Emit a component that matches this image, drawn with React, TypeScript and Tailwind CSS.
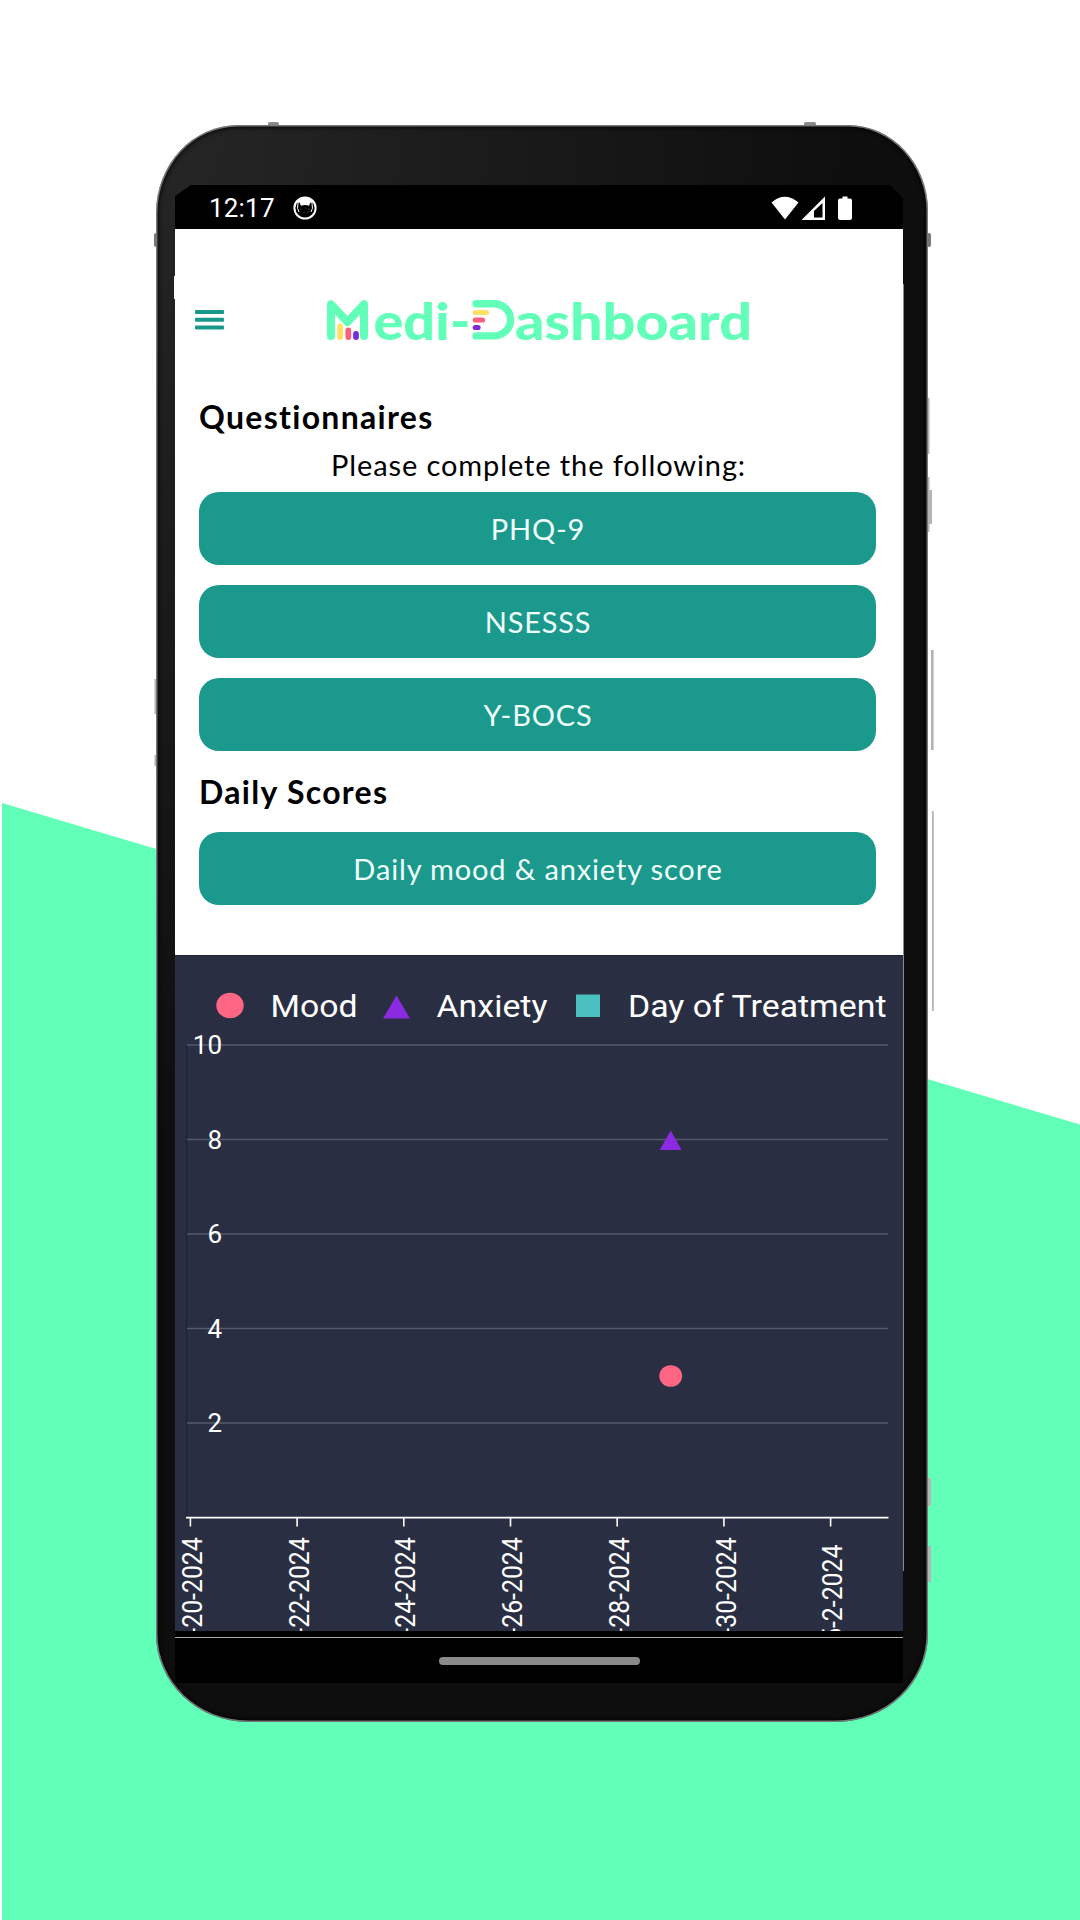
import React from "react";

const questionnaires = [
  { name: "PHQ-9", spacing: "tracking-[0.800px]" },
  { name: "NSESSS", spacing: "tracking-[0.800px]" },
  { name: "Y-BOCS", spacing: "tracking-[0.800px]" },
];

const gridLines = [
  { label: "10", y: 90 },
  { label: "8", y: 184.5 },
  { label: "6", y: 279 },
  { label: "4", y: 373.5 },
  { label: "2", y: 468 },
];

const ticks = [
  { label: "4-20-2024", x: 15.4, top: 582.2 },
  { label: "4-22-2024", x: 122.1, top: 582.2 },
  { label: "4-24-2024", x: 228.8, top: 582.2 },
  { label: "4-26-2024", x: 335.5, top: 582.2 },
  { label: "4-28-2024", x: 442.2, top: 582.2 },
  { label: "4-30-2024", x: 548.9, top: 582.2 },
  { label: "5-2-2024", x: 655.6, top: 589.5 },
];

function Backdrop() {
  return (
    <svg className="absolute inset-0" width="1080" height="1920" viewBox="0 0 1080 1920">
      <path d="M2 803 L1080 1124.5 V1920 H2 Z" fill="#62ffb8" />
      <g fill="#b4b4b4">
        <rect x="154" y="233" width="4" height="14" rx="2" fill="#777" />
        <rect x="927" y="233" width="4" height="14" rx="2" fill="#777" />
        <rect x="268" y="122" width="11" height="6" rx="2" fill="#8a8a8a" />
        <rect x="804" y="122" width="12" height="6" rx="2" fill="#8a8a8a" />
        <rect x="154.500" y="679" width="3" height="35" />
        <rect x="154.500" y="755" width="3" height="11" />
        <rect x="927" y="398" width="2.5" height="56" />
        <rect x="927" y="477" width="2.5" height="55" />
        <rect x="927" y="490" width="5" height="34" />
        <rect x="931" y="650" width="2.6" height="100" />
        <rect x="932" y="811" width="1.8" height="200" />
        <rect x="927" y="1478" width="4" height="28" />
        <rect x="927" y="1546" width="4" height="36" />
      </g>
    </svg>
  );
}

function StatusBar() {
  return (
    <div className="flex h-[44px] items-center justify-between bg-black pl-[34px] pr-[50px] pt-px [clip-path:polygon(16px_0,715px_0,728px_13px,728px_100%,0_100%,0_11px)]">
      <div className="flex items-center gap-[19px]">
        <span className="w-[65px] whitespace-nowrap font-[Roboto] text-[26px] leading-[32px] tracking-[0.2px] text-white">12:17</span>
        <svg width="24" height="24" viewBox="0 0 24 24">
          <circle cx="12" cy="12" r="10.6" fill="#000" stroke="#fff" strokeWidth="2" />
          <path d="M3.500 6 Q12 -4 20.500 6 L19 7 L17.500 6.500 L16 9.800 Q12 8.200 8 9.800 L6.500 6.500 L5 7 Z" fill="#fff" />
          <path d="M5 7 Q3.600 13 6 16 M19 7 Q20.400 13 18 16" stroke="#fff" strokeWidth="1" fill="none" />
          <g fill="#777">
            <circle cx="8" cy="13" r=".6" /><circle cx="13" cy="12" r=".6" /><circle cx="11" cy="16" r=".6" /><circle cx="15" cy="16" r=".6" /><circle cx="16" cy="13" r=".6" />
          </g>
        </svg>
      </div>
      <svg width="82" height="24" viewBox="0 0 82 24" fill="#fff">
        <path d="M0.500 6.500 Q13.700 -5 27.500 6.500 L14 23.500 Z" />
        <path fillRule="evenodd" d="M54 .5 V24 H30.500 Z M51.500 7 V21.500 H43 V15 Z" />
        <path d="M71.500 0.500 H76.500 V2.500 H79 Q81 2.500 81 4.500 V22 Q81 24 79 24 H69 Q67 24 67 22 V4.500 Q67 2.500 69 2.500 H71.500 Z" />
      </svg>
    </div>
  );
}

function Logo() {
  return (
    <svg className="overflow-visible" width="428" height="64" viewBox="0 0 428 64" fill="none" strokeLinecap="round" strokeLinejoin="round">
      <path d="M5 40 V8.300 L21.500 26 L38 8.300 V40" stroke="#62ffb8" strokeWidth="8" />
      <path d="M14.200 30.500 V41" stroke="#ffe066" strokeWidth="5.800" />
      <path d="M22.300 34.500 V41" stroke="#f9607d" strokeWidth="5.800" />
      <path d="M30 38 V41" stroke="#7a2bd6" strokeWidth="5.800" />
      <text x="47.500" y="43.500" textLength="97" lengthAdjust="spacingAndGlyphs" className="font-[Lato] text-[52px] font-black" fill="#62ffb8">edi-</text>
      <path d="M150 7.700 H168 A16.500 16 0 0 1 168 39.900 H150" stroke="#62ffb8" strokeWidth="7.400" />
      <path d="M149.300 16.500 H160.500" stroke="#ffe066" strokeWidth="5.200" />
      <path d="M149.300 24 H156.500" stroke="#f9607d" strokeWidth="5.200" />
      <path d="M149.300 31.500 H152" stroke="#7a2bd6" strokeWidth="5.200" />
      <text x="189" y="43.500" textLength="237" lengthAdjust="spacingAndGlyphs" className="font-[Lato] text-[52px] font-black" fill="#62ffb8">ashboard</text>
    </svg>
  );
}

function Header() {
  return (
    <header className="flex h-[167px] items-start pl-[20px] pt-[67px]">
      <svg className="mt-[13px]" width="29" height="22" viewBox="0 0 29 22" fill="#1a988b">
        <rect y="1" width="29" height="4" rx="1" />
        <rect y="8.700" width="29" height="4" rx="1" />
        <rect y="16.400" width="29" height="4" rx="1" />
      </svg>
      <div className="ml-[102px]">
        <Logo />
      </div>
    </header>
  );
}

function ActionButton({ children, spacing }: { children: string; spacing: string }) {
  return (
    <button className={`flex h-[73px] w-full items-center justify-center rounded-[20px] bg-[#1b998d] pl-px text-[29px] leading-none text-[#f0fffb] ${spacing}`}>
      {children}
    </button>
  );
}

function Chart() {
  return (
    <svg className="block bg-[#2a2e42]" width="728" height="676" viewBox="0 0 728 676" fontFamily="Roboto, sans-serif" fill="#fff">
      <rect width="728" height="1" fill="#1f2231" />
      <ellipse cx="55" cy="50.500" rx="13.700" ry="12.800" fill="#ff6684" />
      <text x="95.500" y="62" fontSize="32" textLength="87" lengthAdjust="spacingAndGlyphs">Mood</text>
      <path d="M221.500 40.500 L235 63.500 H208 Z" fill="#8a2be2" />
      <text x="261.500" y="62" fontSize="32" textLength="111" lengthAdjust="spacingAndGlyphs">Anxiety</text>
      <rect x="401" y="39.500" width="24" height="22.500" fill="#4bc0c0" />
      <text x="453" y="62" fontSize="32" textLength="258.500" lengthAdjust="spacingAndGlyphs">Day of Treatment</text>
      <path d="M11.700 90 V562" stroke="#22222a" strokeWidth="1.200" />
      {gridLines.map((g) => (
        <g key={g.label}>
          <path d={`M12 ${g.y} H713`} stroke="#555a6a" strokeWidth="1.500" />
          <text x="47" y={g.y + 9} fontSize="26" textAnchor="end">{g.label}</text>
        </g>
      ))}
      <path d="M11 562.700 H713.500" stroke="#fff" strokeWidth="1.800" />
      {ticks.map((t) => (
        <g key={t.label}>
          <path d={`M${t.x} 563 V571.500`} stroke="#fff" strokeWidth="1.600" />
          <text transform={`translate(${t.x + 11.600} ${t.top}) rotate(-90) scale(.92 1)`} fontSize="27" textAnchor="end">{t.label}</text>
        </g>
      ))}
      <path d="M495.700 175.500 L506.700 195 H484.700 Z" fill="#8a2be2" />
      <ellipse cx="495.700" cy="421" rx="11.400" ry="10.800" fill="#ff6684" />
    </svg>
  );
}

export default function App() {
  return (
    <div className="relative h-[1920px] w-[1080px] overflow-hidden bg-white pl-[156px] pt-[125px]">
      <Backdrop />
      <div className="relative h-[1597px] w-[772px] rounded-[82px_80px_92px_92px/88px_86px_88px_88px] bg-[#0d0d0d] bg-[radial-gradient(ellipse_700px_1000px_at_0_0,#262626_0%,#0e0e0e_100%)] pl-[19px] pt-[60px] shadow-[inset_0_0_0_1.500px_#77777a,inset_0_0_5px_2px_#000]">
        <div className="relative w-[728px]">
          <StatusBar />
          <div className="h-[726px] bg-white font-[Lato] text-black">
            <Header />
            <section className="pl-[24px] pr-[27px]">
              <h2 className="h-[50px] text-[32px] font-bold leading-[42px] tracking-[1.300px]">Questionnaires</h2>
              <p className="h-[46px] pl-[2px] text-center text-[29px] leading-[37px] tracking-[0.900px]">Please complete the following:</p>
              <div className="flex flex-col gap-[20px]">
                {questionnaires.map((q) => (
                  <ActionButton key={q.name} spacing={q.spacing}>{q.name}</ActionButton>
                ))}
              </div>
              <h2 className="mt-[20px] h-[61px] text-[32px] font-bold leading-[42px] tracking-[1.300px]">Daily Scores</h2>
              <ActionButton spacing="tracking-[0.850px]">Daily mood &amp; anxiety score</ActionButton>
            </section>
          </div>
          <Chart />
          <div className="h-[52px] bg-black pt-[6px]">
            <div className="h-px bg-[#aaa]" />
            <div className="mx-auto mt-[19px] h-[7.500px] w-[201px] rounded-full bg-[#8a8a8a]" />
          </div>
          <div className="absolute left-[728px] top-[99px] h-[1287px] w-px bg-[#8a8a8a]" />
          <div className="absolute -left-px top-[91px] h-[23px] w-px bg-white" />
        </div>
      </div>
    </div>
  );
}
